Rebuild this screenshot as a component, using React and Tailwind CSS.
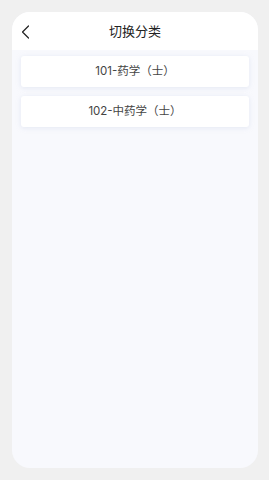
import React from 'react';

const categories = ['101-药学（士）', '102-中药学（士）'];

export default function App() {
  return (
    <div
      className="w-[269px] h-[480px] bg-[#f0f0f0] p-3"
      style={{ fontFamily: 'Inter, "Noto Sans CJK SC", sans-serif' }}
    >
      <div className="h-[456px] w-[246px] rounded-[18px] bg-[#f8f9fd] overflow-hidden flex flex-col">
        <div className="h-[38px] bg-white flex items-center relative shrink-0">
          <svg className="absolute left-[9px] top-[13px]" width="9" height="14" viewBox="0 0 9 14" fill="none">
            <path d="M7.5 1 L1.5 7 L7.5 13" stroke="#222" strokeWidth="1.2" strokeLinecap="round" strokeLinejoin="round" />
          </svg>
          <span className="mx-auto mt-[2px] text-[13px] text-[#222]">切换分类</span>
        </div>
        <div className="flex flex-col gap-[9px] px-[9px] pt-[6px]">
          {categories.map((c) => (
            <div
              key={c}
              className="h-[31px] bg-white rounded-[3px] shadow-[0_1px_5px_rgba(190,200,225,0.35)] flex items-center justify-center text-[11.5px] text-[#444]"
            >
              {c}
            </div>
          ))}
        </div>
      </div>
    </div>
  );
}
